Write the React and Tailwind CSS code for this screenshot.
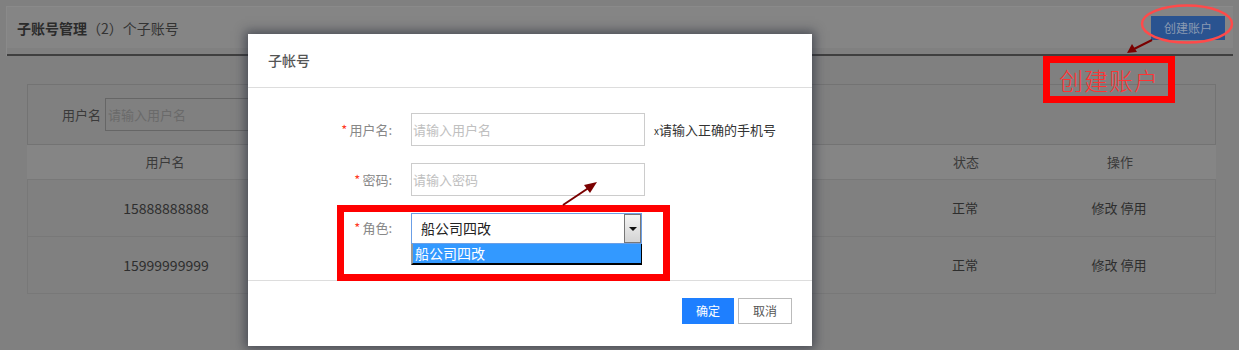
import React from "react";

const font = { fontFamily: '"Noto Sans CJK SC", "Noto Sans", sans-serif' };

function Star() {
  return <span className="text-[#ff3b1f] mr-[2px]">*</span>;
}

export default function App() {
  const rows = ["15888888888", "15999999999"];
  return (
    <div
      className="relative w-[1239px] h-[350px] overflow-hidden bg-[#808080] text-[#2b2b2b]"
      style={font}
    >
      {/* Background page (dimmed) */}
      <div className="pt-[6px] px-[6px]">
        <div className="border-t border-l border-[#8a8a8a]">
          <div className="h-[41px] bg-[#858585] flex items-center justify-between pl-[10px] pr-[8px]">
            <div className="text-[14px] leading-none">
              <span className="font-bold">子账号管理</span>
              <span className="text-[#333]">（2）个子账号</span>
            </div>
            <div className="w-[74px] h-[24px] bg-[#2a5390] text-[#8a9ab2] text-[12px] flex items-center justify-center">
              创建账户
            </div>
          </div>
          <div className="h-[6px]" />
          <div className="h-[2px] bg-[#3f3f3f]" />
        </div>
        <div className="pl-[21px] pr-[17px] pt-[28px]">
          <div className="h-[61px] border border-[#737373] flex items-center pl-[34px]">
            <span className="text-[13px] text-[#3a3a3a] mr-[4px]">用户名</span>
            <div className="w-[300px] h-[33px] border border-[#666] flex items-center pl-[2px] text-[13px] text-[#6a6a6a]">
              请输入用户名
            </div>
          </div>
          <div className="grid grid-cols-[276px_1fr_1fr_116px_192px] h-[35px] bg-[#858585] border-b border-[#787878] items-center text-[13px] text-[#3a3a3a] text-center">
            <div>用户名</div>
            <div />
            <div />
            <div>状态</div>
            <div>操作</div>
          </div>
          {rows.map((r) => (
            <div
              key={r}
              className="grid grid-cols-[276px_1fr_1fr_116px_192px] h-[57px] border-b border-x border-[#787878] items-center text-[14px] text-[#2e2e2e] text-center"
            >
              <div>{r}</div>
              <div />
              <div />
              <div className="text-[13px]">正常</div>
              <div className="text-[13px]">修改 停用</div>
            </div>
          ))}
        </div>
      </div>

      {/* Modal */}
      <div className="absolute left-[248px] top-[34px] w-[564px] h-[312px] bg-white shadow-[0_0_10px_3px_rgba(30,35,50,0.55)] flex flex-col">
        <div className="h-[54px] border-b border-[#dddddd] flex items-center pl-[20px] text-[14px] text-[#555] font-medium">
          子帐号
        </div>
        <div className="h-[193px] border-b border-[#dddddd] pt-[25px] flex flex-col gap-[17px]">
          <div className="flex items-center">
            <div className="w-[146px] text-right text-[13px] text-[#888] pr-[2px]">
              <Star />用户名:
            </div>
            <div className="ml-[17px] w-[234px] h-[33px] border border-[#cccccc] flex items-center pl-[1px] text-[13px] text-[#c0c0c0]">
              请输入用户名
            </div>
            <div className="ml-[9px] text-[13px] text-[#333]">
              <span className="text-[10px]">x</span>请输入正确的手机号
            </div>
          </div>
          <div className="flex items-center">
            <div className="w-[146px] text-right text-[13px] text-[#888] pr-[2px]">
              <Star />密码:
            </div>
            <div className="ml-[17px] w-[234px] h-[33px] border border-[#cccccc] flex items-center pl-[1px] text-[13px] text-[#c0c0c0]">
              请输入密码
            </div>
          </div>
          <div className="flex items-start">
            <div className="w-[146px] text-right text-[13px] text-[#888] pr-[2px] pt-[5px]">
              <Star />角色:
            </div>
            <div className="ml-[17px] w-[231px]">
              <div className="h-[31px] border border-[#6b9fe6] flex items-center justify-between">
                <span className="pl-[9px] text-[14px] text-[#222]">船公司四改</span>
                <div className="w-[17px] h-[29px] border border-[#777] bg-gradient-to-b from-[#f4f4f4] to-[#d4d4d4] flex items-center justify-center">
                  <div className="w-0 h-0 border-l-[4px] border-r-[4px] border-t-[4px] border-l-transparent border-r-transparent border-t-[#111]" />
                </div>
              </div>
              <div className="h-[21px] bg-[#3399ff] border-l-[2px] border-l-[#999] border-r border-b-[2px] border-r-black border-b-black text-white text-[14px] leading-[19px] pl-[2px]">
                船公司四改
              </div>
            </div>
          </div>
        </div>
        <div className="flex-1 flex justify-end items-start pt-[17px] pr-[20px] gap-[4px]">
          <div className="w-[52px] h-[26px] bg-[#1e7fff] text-white text-[12px] flex items-center justify-center">
            确定
          </div>
          <div className="w-[54px] h-[26px] border border-[#bbbbbb] text-[#555] text-[12px] flex items-center justify-center">
            取消
          </div>
        </div>
      </div>

      {/* Annotations */}
      <div className="absolute left-[337px] top-[205px] w-[333px] h-[76px] border-[7px] border-[#ff0000]" />
      <div className="absolute left-[1043px] top-[56px] w-[132px] h-[47px] border-[7px] border-[#ff0000] flex items-center justify-center text-[#ff3333] text-[24px] font-light leading-none tracking-[1px]">
        创建账户
      </div>
      <svg className="absolute left-0 top-0" width="1239" height="350" viewBox="0 0 1239 350">
        <ellipse cx="1187" cy="24" rx="45" ry="18.5" fill="none" stroke="#ff4a4a" strokeWidth="2.5" />
        <line x1="563" y1="205" x2="590" y2="187" stroke="#7a0000" strokeWidth="2" />
        <polygon points="597,182 584,185 590,193" fill="#7a0000" />
        <line x1="1152" y1="40" x2="1134" y2="49" stroke="#7a0000" strokeWidth="2" />
        <polygon points="1127,53 1132,44 1137,52" fill="#7a0000" />
      </svg>
    </div>
  );
}
